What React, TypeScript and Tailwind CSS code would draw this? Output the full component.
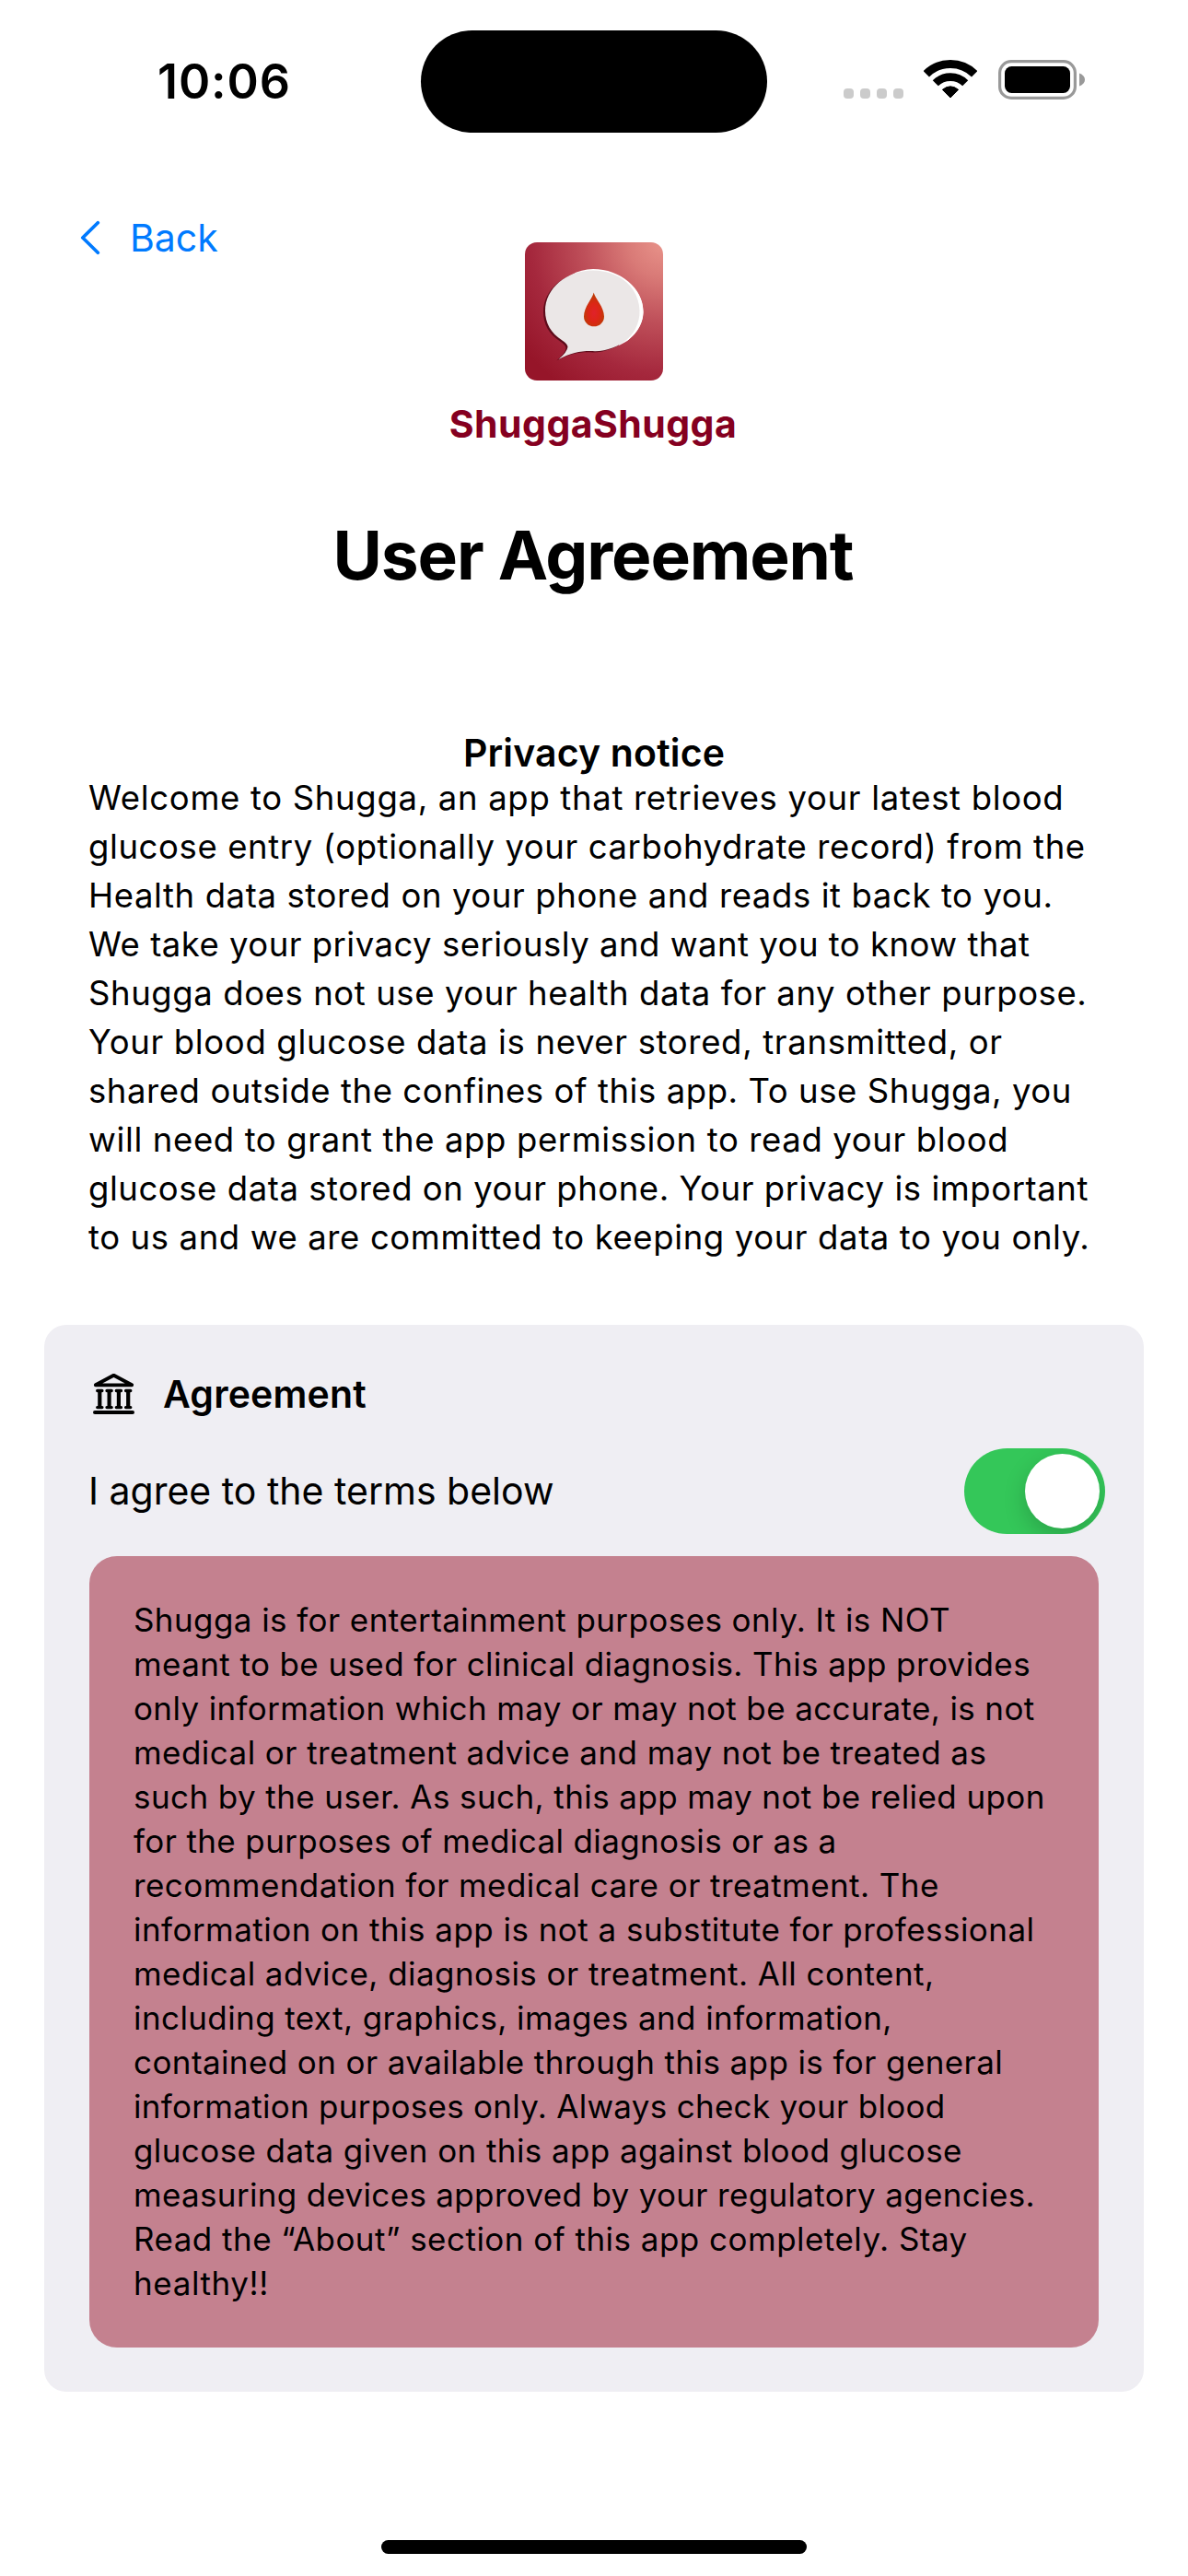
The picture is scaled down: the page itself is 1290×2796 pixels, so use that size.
import React, { useState } from "react";

type Line = { text: string; tracking: string };

const privacyLines: Line[] = [
  { text: "Welcome to Shugga, an app that retrieves your latest blood", tracking: "tracking-[0.682px]" },
  { text: "glucose entry (optionally your carbohydrate record) from the", tracking: "tracking-[0.602px]" },
  { text: "Health data stored on your phone and reads it back to you.", tracking: "tracking-[0.605px]" },
  { text: "We take your privacy seriously and want you to know that", tracking: "tracking-[0.492px]" },
  { text: "Shugga does not use your health data for any other purpose.", tracking: "tracking-[0.584px]" },
  { text: "Your blood glucose data is never stored, transmitted, or", tracking: "tracking-[0.665px]" },
  { text: "shared outside the confines of this app. To use Shugga, you", tracking: "tracking-[0.572px]" },
  { text: "will need to grant the app permission to read your blood", tracking: "tracking-[0.626px]" },
  { text: "glucose data stored on your phone. Your privacy is important", tracking: "tracking-[0.551px]" },
  { text: "to us and we are committed to keeping your data to you only.", tracking: "tracking-[0.613px]" },
];

const termsLines: Line[] = [
  { text: "Shugga is for entertainment purposes only. It is NOT", tracking: "tracking-[0.415px]" },
  { text: "meant to be used for clinical diagnosis. This app provides", tracking: "tracking-[0.395px]" },
  { text: "only information which may or may not be accurate, is not", tracking: "tracking-[0.37px]" },
  { text: "medical or treatment advice and may not be treated as", tracking: "tracking-[0.445px]" },
  { text: "such by the user. As such, this app may not be relied upon", tracking: "tracking-[0.415px]" },
  { text: "for the purposes of medical diagnosis or as a", tracking: "tracking-[0.38px]" },
  { text: "recommendation for medical care or treatment. The", tracking: "tracking-[0.43px]" },
  { text: "information on this app is not a substitute for professional", tracking: "tracking-[0.465px]" },
  { text: "medical advice, diagnosis or treatment. All content,", tracking: "tracking-[0.445px]" },
  { text: "including text, graphics, images and information,", tracking: "tracking-[0.41px]" },
  { text: "contained on or available through this app is for general", tracking: "tracking-[0.405px]" },
  { text: "information purposes only. Always check your blood", tracking: "tracking-[0.29px]" },
  { text: "glucose data given on this app against blood glucose", tracking: "tracking-[0.41px]" },
  { text: "measuring devices approved by your regulatory agencies.", tracking: "tracking-[0.33px]" },
  { text: "Read the “About” section of this app completely. Stay", tracking: "tracking-[0.475px]" },
  { text: "healthy!!", tracking: "tracking-[0.6px]" },
];

function Lines({ lines }: { lines: Line[] }) {
  return (
    <>
      {lines.map((line) => (
        <span key={line.text} className={`block whitespace-nowrap ${line.tracking}`}>
          {line.text}
        </span>
      ))}
    </>
  );
}

function WifiIcon() {
  return (
    <svg width="58" height="44" viewBox="0 0 58 44" fill="none" stroke="#000">
      <path d="M2.8 16.3A37.1 37.1 0 0 1 55.2 16.3" strokeWidth="9" />
      <path d="M12.8 26.3A22.9 22.9 0 0 1 45.2 26.3" strokeWidth="8.6" />
      <path d="M20.4 33.3Q29 26.4 37.6 33.3L29 42Z" fill="#000" strokeWidth="1" strokeLinejoin="round" />
    </svg>
  );
}

function BatteryIcon() {
  return (
    <svg width="94" height="43" viewBox="0 0 94 43">
      <rect x="1.6" y="1.6" width="81.8" height="39.8" rx="12.5" fill="none" stroke="#999" strokeWidth="3.2" />
      <rect x="7" y="7" width="71" height="29" rx="7.5" />
      <path d="M88 14.5C92 16 94 18.500 94 21.500S92 27 88 28.500Z" fill="#999" />
    </svg>
  );
}

function StatusBar() {
  return (
    <div className="grid h-[177px] grid-cols-[1fr_376px_1fr] items-center">
      <span className="pl-[171px] text-[52px] leading-[64px] font-semibold tracking-[0.9px]">10:06</span>
      <div className="h-[111px] rounded-full bg-black" />
      <div className="mb-[4px] flex h-[43px] items-end justify-end pr-[112px]">
        <div className="mr-[22px] mb-px flex gap-[7px]">
          <i className="size-[11px] rounded-[4px] bg-[#cbcbcb]" />
          <i className="size-[11px] rounded-[4px] bg-[#cbcbcb]" />
          <i className="size-[11px] rounded-[4px] bg-[#cbcbcb]" />
          <i className="size-[11px] rounded-[4px] bg-[#cbcbcb]" />
        </div>
        <WifiIcon />
        <div className="w-[23px]" />
        <BatteryIcon />
      </div>
    </div>
  );
}

function Logo() {
  const bubble =
    "M36.500 127Q46 119 46.500 113.500Q46 110 40.500 106.500C28 98.500 22 87.500 22 74.500C22 50 45 30.500 74 30.500C103 30.500 126 50.500 126 75C126 98 103 118 76 118.200C62 117.500 51 119.500 36.500 127Z";
  return (
    <svg width="150" height="150" viewBox="0 0 150 150" className="rounded-[13px]">
      <defs>
        <radialGradient id="bg" gradientUnits="userSpaceOnUse" cx="150" cy="0" r="190">
          <stop offset="0" stopColor="#e8938a" />
          <stop offset="0.2" stopColor="#d97a77" />
          <stop offset="0.45" stopColor="#bf505a" />
          <stop offset="0.75" stopColor="#a5283d" />
          <stop offset="1" stopColor="#961529" />
        </radialGradient>
        <radialGradient id="drop" cx="0.5" cy="0.6" r="0.5">
          <stop offset="0" stopColor="#e0222b" />
          <stop offset="0.55" stopColor="#dc2615" />
          <stop offset="1" stopColor="#bf3a08" />
        </radialGradient>
      </defs>
      <rect width="150" height="150" fill="url(#bg)" />
      <path d={bubble} fill="#5e0c1b" transform="translate(-2 1.300)" />
      <path d="M34 52C42 38 57 29 74 29C104 29 128.500 50 128.500 75C128.500 90 118 105 102 112L110 70Z" fill="#fff" />
      <path d={bubble} fill="#ebe7e7" />
      <path d="M100 36C120 46 128.500 60 128.500 76C128.500 90 119 102 108 109C118 100 125 88 124.500 74C124 58 115 44 100 36Z" fill="#fff" />
      <path d="M74.700 54.500C76 61 86 70 86 80.500A11 10.800 0 0 1 64 80.500C64 70 73.500 61 74.700 54.500Z" fill="url(#drop)" />
    </svg>
  );
}

function ColumnsIcon() {
  return (
    <svg width="45" height="46" viewBox="0 0 45 46" fill="none" stroke="#000" strokeLinecap="round" strokeLinejoin="round">
      <path d="M2.800 13.300L22.500 2.800L42.200 13.300Z" strokeWidth="3.800" />
      <path d="M2 43H43" strokeWidth="4" />
      {[7.3, 17.6, 27.9, 38.2].map((x) => (
        <g key={x}>
          <path d={`M${x} 20V37.500`} strokeWidth="4.200" strokeLinecap="butt" />
          <path d={`M${x - 2.6} 19.500H${x + 2.6}M${x - 2.6} 37.600H${x + 2.6}`} strokeWidth="3.300" />
        </g>
      ))}
    </svg>
  );
}

export default function App() {
  const [agreed, setAgreed] = useState(true);
  return (
    <main className="flex h-[2796px] w-[1290px] flex-col overflow-hidden bg-white font-[Inter,sans-serif] text-black">
      <StatusBar />

      <header className="grid h-[308px] grid-cols-[1fr_auto_1fr] items-start pt-[56px]">
        <button className="flex h-[50px] items-center pl-[87px] text-[41px] leading-[50px] text-[#007aff]">
          <svg width="22" height="40" viewBox="0 0 22 40" fill="none" stroke="currentColor" strokeWidth="3.700" strokeLinecap="round" strokeLinejoin="round">
            <path d="M19.300 3.700L2.800 20L19.300 36.300" />
          </svg>
          <span className="ml-[32px]">Back</span>
        </button>
        <div className="flex flex-col items-center pt-[30px]">
          <Logo />
          <span className="mt-[22px] mr-[2px] text-[41px] leading-[50px] font-bold tracking-[0.45px] text-[#850020]">ShuggaShugga</span>
        </div>
      </header>

      <h1 className="mt-[74px] mr-[2px] text-center text-[73px] leading-[88px] font-bold tracking-[-1.150px]">User Agreement</h1>

      <section className="mt-[145px] pl-[96px]">
        <h2 className="-ml-[96px] text-center text-[41px] leading-[50px] font-semibold tracking-[0.15px]">Privacy notice</h2>
        <p className="-mt-[2px] text-[36.5px] leading-[53px]">
          <Lines lines={privacyLines} />
        </p>
      </section>

      <section className="mx-[48px] mt-[68px] rounded-[24px] bg-[#efeef3] px-[48px] pt-[50px] pb-[48px]">
        <div className="flex h-[50px] items-center pl-[5px]">
          <ColumnsIcon />
          <h3 className="ml-[31px] text-[41px] leading-[50px] font-semibold tracking-[0.15px]">Agreement</h3>
        </div>
        <div className="mt-[34px] -mr-[6px] flex h-[93px] items-center justify-between">
          <span className="pb-[2px] text-[41px] leading-[50px]">I agree to the terms below</span>
          <button
            role="switch"
            aria-checked={agreed}
            aria-label="I agree to the terms below"
            onClick={() => setAgreed(!agreed)}
            className={`flex h-[93px] w-[153px] items-center overflow-hidden rounded-full p-[6px] ${agreed ? "justify-end bg-[#34c759]" : "justify-start bg-[#d8d8dc]"}`}
          >
            <span className="size-[81px] rounded-full bg-white shadow-[0_9px_24px_rgba(0,0,0,0.18)]" />
          </button>
        </div>
        <p className="mt-[24px] mr-[1px] ml-[1px] h-[859px] rounded-[30px] bg-[#c4818f] pt-[45px] pl-[48px] text-[35px] leading-[48px]">
          <Lines lines={termsLines} />
        </p>
      </section>

      <div className="mx-auto mt-auto mb-[24px] h-[15px] w-[462px] shrink-0 rounded-full bg-black" />
    </main>
  );
}
